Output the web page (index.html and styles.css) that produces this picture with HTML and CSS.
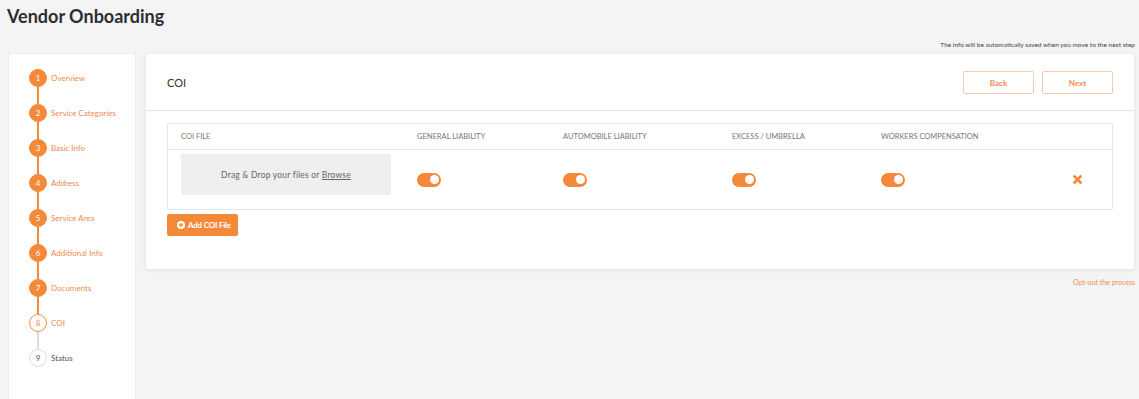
FILE: index.html
```html
<!DOCTYPE html>
<html lang="en">
<head>
  <meta charset="UTF-8">
  <meta name="viewport" content="width=device-width,initial-scale=1">
  <title>Vendor Onboarding</title>
  <link rel="stylesheet" href="styles.css">
</head>
<body>

  <header class="page-head">
    <h1>Vendor Onboarding</h1>
    <p class="autosave">The info will be automatically saved when you move to the next step</p>
  </header>

  <div class="layout">
    <aside class="steps">
      <div class="step done"><div class="marker"><span class="dot">1</span><span class="line"></span></div><span class="label">Overview</span></div>
      <div class="step done"><div class="marker"><span class="dot">2</span><span class="line"></span></div><span class="label">Service Categories</span></div>
      <div class="step done"><div class="marker"><span class="dot">3</span><span class="line"></span></div><span class="label">Basic Info</span></div>
      <div class="step done"><div class="marker"><span class="dot">4</span><span class="line"></span></div><span class="label">Address</span></div>
      <div class="step done"><div class="marker"><span class="dot">5</span><span class="line"></span></div><span class="label">Service Area</span></div>
      <div class="step done"><div class="marker"><span class="dot">6</span><span class="line"></span></div><span class="label">Additional Info</span></div>
      <div class="step done"><div class="marker"><span class="dot">7</span><span class="line"></span></div><span class="label">Documents</span></div>
      <div class="step current"><div class="marker"><span class="dot">8</span><span class="line"></span></div><span class="label">COI</span></div>
      <div class="step todo"><div class="marker"><span class="dot">9</span></div><span class="label">Status</span></div>
    </aside>

    <div class="main">
      <section class="card">
        <div class="card-head">
          <h2>COI</h2>
          <div class="actions">
            <button class="btn-outline">Back</button>
            <button class="btn-outline">Next</button>
          </div>
        </div>

        <div class="card-body">
          <div class="coi-table">
            <div class="row head">
              <span>COI FILE</span>
              <span>GENERAL LIABILITY</span>
              <span>AUTOMOBILE LIABILITY</span>
              <span>EXCESS / UMBRELLA</span>
              <span>WORKERS COMPENSATION</span>
              <span></span>
            </div>
            <div class="row item">
              <div class="dropzone"><p>Drag &amp; Drop your files or <u>Browse</u></p></div>
              <span class="toggle on"></span>
              <span class="toggle on"></span>
              <span class="toggle on"></span>
              <span class="toggle on"></span>
              <span class="remove">
                <svg width="9" height="9" viewBox="0 0 9 9"><path d="M1.5 1.5 L7.5 7.5 M7.5 1.5 L1.5 7.5" stroke="#f5893a" stroke-width="2.6" stroke-linecap="square"/></svg>
              </span>
            </div>
          </div>

          <button class="btn-add">
            <svg width="8" height="8" viewBox="0 0 8 8"><circle cx="4" cy="4" r="4" fill="#fff"/><path d="M4 2 V6 M2 4 H6" stroke="#f5893a" stroke-width="1.3"/></svg>
            Add COI File
          </button>
        </div>
      </section>

      <a class="optout" href="#">Opt-out the process</a>
    </div>
  </div>

</body>
</html>
```

FILE: styles.css
```css
:root {
  --orange: #f5893a;
  --orange-text: #ef8a4f;
  --orange-soft: #f4cbab;
  --bg: #f4f4f4;
  --line: #e6e6e6;
  --grey: #777;
}
*, *::before, *::after { box-sizing: border-box; }
html, body { height: 100%; }
body {
  margin: 0;
  overflow: hidden;
  font-family: 'Lato', 'Open Sans', sans-serif;
  background: var(--bg);
  color: #333;
}

.page-head {
  padding: 5px 4px 0 7px;
}
.page-head h1 {
  margin: 0;
  font-size: 18px;
  line-height: 22px;
  font-weight: 700;
  color: #2b2f33;
}
.autosave {
  margin: 13px 0 0;
  text-align: right;
  font-size: 6.5px;
  line-height: 9px;
  color: #444;
}

.layout {
  display: flex;
  gap: 9px;
  padding: 4px 4px 0 8px;
}

/* steps */
.steps {
  width: 128px;
  height: 346px;
  flex: none;
  background: #fff;
  border: 1px solid #ececec;
  border-bottom: none;
  padding: 15px 0 0 20px;
}
.step {
  display: flex;
  gap: 4px;
}
.marker {
  display: flex;
  flex-direction: column;
  align-items: center;
  width: 18px;
}
.dot {
  width: 18px;
  height: 18px;
  border-radius: 50%;
  display: flex;
  align-items: center;
  justify-content: center;
  font-size: 8px;
  background: var(--orange);
  color: #fff;
  border: 1px solid var(--orange);
}
.line {
  width: 2px;
  height: 17px;
  background: var(--orange);
}
.label {
  font-size: 8px;
  line-height: 18px;
  color: var(--orange-text);
}
.step.current .dot {
  background: #fff;
  color: var(--orange-text);
}
.step.current .line { background: #d9dce3; width: 1.5px; }
.step.todo .dot {
  background: #fff;
  border-color: #d9dce3;
  color: #555;
}
.step.todo .label { color: #555; }

/* main */
.main {
  flex: 1;
  display: flex;
  flex-direction: column;
}
.card {
  background: #fff;
  border: 1px solid #ececec;
  box-shadow: 0 1px 3px rgba(0,0,0,.06);
}
.card-head {
  display: flex;
  align-items: center;
  justify-content: space-between;
  height: 57px;
  padding: 1px 21px 0 21px;
  border-bottom: 1px solid var(--line);
}
.card-head h2 {
  margin: 0;
  font-size: 11px;
  font-weight: 400;
  color: #333;
}
.actions {
  display: flex;
  gap: 8px;
}
.btn-outline {
  width: 71px;
  height: 23px;
  background: #fff;
  border: 1px solid var(--orange-soft);
  border-radius: 2px;
  font-family: inherit;
  font-size: 8px;
  font-weight: 700;
  color: var(--orange-text);
}

.card-body {
  padding: 12px 21px 33px;
}
.coi-table {
  border: 1px solid var(--line);
  border-radius: 2px;
}
.row {
  display: grid;
  grid-template-columns: 236px 146px 169px 149px 1fr 44px;
  align-items: center;
  padding: 0 13px;
}
.row.head {
  height: 26px;
  border-bottom: 1px solid var(--line);
  font-size: 7.5px;
  color: var(--grey);
}
.row.item {
  height: 59px;
}
.dropzone {
  align-self: start;
  margin-top: 4px;
  width: 210px;
  height: 41px;
  border-radius: 2px;
  background: #efefef;
  display: flex;
  align-items: center;
  justify-content: center;
  font-size: 8.5px;
  color: #666;
  letter-spacing: .2px;
}
.dropzone p { margin: 0; }
.dropzone u { text-decoration: underline; }
.toggle {
  position: relative;
  width: 24px;
  height: 14px;
  border-radius: 7px;
  background: #ccc;
}
.toggle.on { background: var(--orange); }
.toggle::after {
  content: '';
  position: absolute;
  top: 2.5px;
  left: 2.5px;
  width: 9px;
  height: 9px;
  border-radius: 50%;
  background: #fff;
}
.toggle.on::after { left: 12.5px; }
.remove {
  display: flex;
  justify-content: center;
}

.btn-add {
  display: flex;
  align-items: center;
  gap: 3px;
  margin-top: 4px;
  height: 22px;
  width: 71px;
  padding: 0 0 0 10px;
  background: var(--orange);
  border: none;
  border-radius: 2px;
  font-family: inherit;
  font-size: 8px;
  font-weight: 700;
  letter-spacing: -.2px;
  color: #fff;
}

.optout {
  align-self: flex-end;
  margin-top: 8px;
  font-size: 7px;
  color: var(--orange-text);
  text-decoration: none;
}
```
